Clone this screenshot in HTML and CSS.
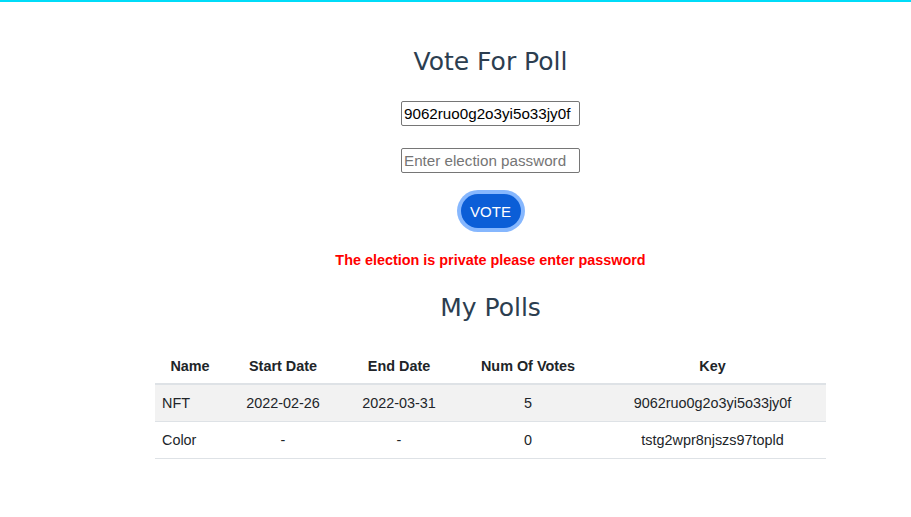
FILE: index.html
```html
<!DOCTYPE html>
<html>
<head>
<meta charset="utf-8">
<link rel="stylesheet" href="styles.css">
</head>
<body>
<div class="topbar"></div>
<main class="page">
  <h1 class="title">Vote For Poll</h1>
  <form class="vote-form">
    <input class="field" type="text" value="9062ruo0g2o3yi5o33jy0f">
    <input class="field" type="password" placeholder="Enter election password">
    <button class="vote-btn" type="button">VOTE</button>
  </form>
  <p class="error">The election is private please enter password</p>
  <h2 class="title subtitle">My Polls</h2>
  <table class="polls">
    <colgroup>
      <col class="c-name"><col class="c-start"><col class="c-end"><col class="c-votes"><col class="c-key">
    </colgroup>
    <thead>
      <tr><th>Name</th><th>Start Date</th><th>End Date</th><th>Num Of Votes</th><th>Key</th></tr>
    </thead>
    <tbody>
      <tr class="striped"><td class="left">NFT</td><td>2022-02-26</td><td>2022-03-31</td><td>5</td><td>9062ruo0g2o3yi5o33jy0f</td></tr>
      <tr><td class="left">Color</td><td>-</td><td>-</td><td>0</td><td>tstg2wpr8njszs97topld</td></tr>
    </tbody>
  </table>
</main>
</body>
</html>
```
FILE: styles.css
```css
html, body {
  margin: 0;
  padding: 0;
  background: #fff;
}
body {
  font-family: "Liberation Sans", Arial, sans-serif;
  color: #212529;
}
.topbar {
  height: 2px;
  background: #00dcf8;
}
.page {
  padding-left: 70px;
  text-align: center;
}
.title {
  font-family: "DejaVu Sans", sans-serif;
  font-weight: normal;
  font-size: 25px;
  line-height: 28px;
  color: #2c3e50;
  margin: 46px 0 0;
}
.vote-form {
  display: flex;
  flex-direction: column;
  align-items: center;
  margin-top: 25px;
}
.field {
  box-sizing: border-box;
  width: 179px;
  height: 25px;
  margin: 0 0 22px;
  padding: 1px 2px;
  border: 1px solid #767676;
  border-radius: 2px;
  font-family: "Liberation Sans", Arial, sans-serif;
  font-size: 15.2px;
  color: #000;
  outline: none;
}
.field::placeholder {
  color: #757575;
}
.vote-btn {
  margin-top: -1px;
  width: 60px;
  height: 34px;
  border: none;
  border-radius: 17px;
  background: #0b5ed7;
  color: #fff;
  font-family: "Liberation Sans", Arial, sans-serif;
  font-size: 15px;
  box-shadow: 0 0 0 4px #86b7fe;
  padding: 0;
}
.error {
  margin: 22px 0 0;
  font-size: 14.4px;
  line-height: 20px;
  font-weight: bold;
  color: #ff0000;
}
.subtitle {
  margin-top: 24px;
}
.polls {
  margin: 23px auto 0;
  width: 671px;
  border-collapse: collapse;
  table-layout: fixed;
  font-size: 14.4px;
  color: #212529;
}
.c-name { width: 70px; }
.c-start { width: 116px; }
.c-end { width: 116px; }
.c-votes { width: 142px; }
.c-key { width: 227px; }
.polls th, .polls td {
  height: 36px;
  padding: 0 7px;
  text-align: center;
  vertical-align: middle;
  border-bottom: 1px solid #dee2e6;
}
.polls th {
  font-weight: bold;
  height: 34px;
  padding-top: 4px;
  border-bottom-width: 2px;
}
.polls td.left {
  text-align: left;
}
.polls tr.striped td {
  background: #f2f2f2;
}
```
